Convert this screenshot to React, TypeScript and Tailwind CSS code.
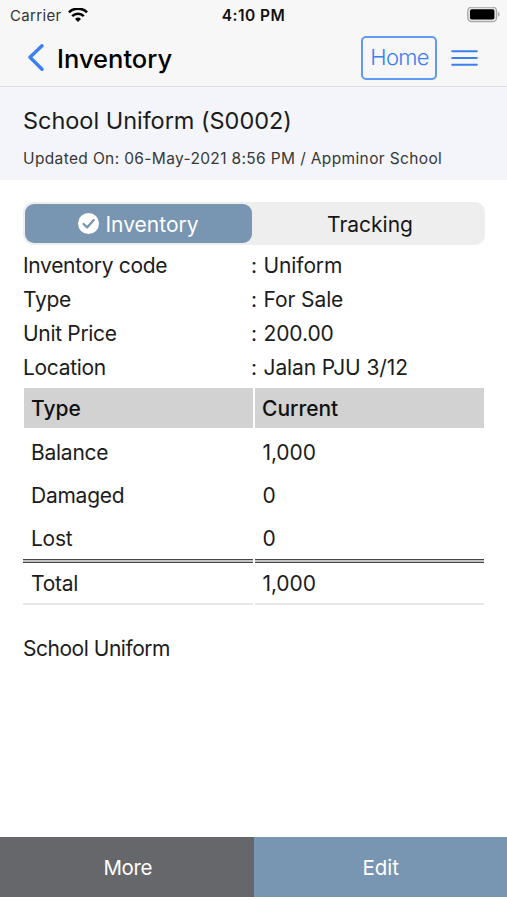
// Define types for the inventory data
type Detail = {
  label: string;
  value: string;
};

type StockRow = {
  type: string;
  current: string;
};

const details: Detail[] = [
  { label: "Inventory code", value: "Uniform" },
  { label: "Type", value: "For Sale" },
  { label: "Unit Price", value: "200.00" },
  { label: "Location", value: "Jalan PJU 3/12" },
];

const stock: StockRow[] = [
  { type: "Balance", current: "1,000" },
  { type: "Damaged", current: "0" },
  { type: "Lost", current: "0" },
];

function StatusBar() {
  return (
    <div className="grid h-[30px] grid-cols-3 items-center text-[15px] leading-none">
      <div className="flex items-center pl-[10px] text-[#333]">
        <span className="tracking-[0.35px]">Carrier</span>
        <svg className="ml-[6px] h-[15px] w-5" viewBox="0 0 20 15" fill="none" stroke="#050505">
          <path d="M1 4.4a12.8 12.8 0 0 1 18 0" strokeWidth="2.7" />
          <path d="M4.2 8.1a8.2 8.2 0 0 1 11.6 0" strokeWidth="2.6" />
          <path d="M10 14l-3-3a4.3 4.3 0 0 1 6 0z" fill="#050505" stroke="none" />
        </svg>
      </div>
      <span className="pt-px text-center text-[15.5px] font-semibold tracking-[0.5px] text-[#111]">4:10 PM</span>
      <div className="flex justify-end pr-[7px]">
        <svg className="h-4 w-[33px]" viewBox="0 0 33 16">
          <rect x="0.8" y="0.1" width="28.8" height="14.6" rx="4" fill="#e4e4e4" stroke="#a9a9a9" strokeWidth="1.3" />
          <rect x="3" y="2.3" width="24.4" height="10.2" rx="1.8" fill="#000" />
          <path d="M31 5.1c2 .6 2 4 0 4.6z" fill="#a9a9a9" />
        </svg>
      </div>
    </div>
  );
}

function NavBar() {
  return (
    <div className="flex h-14 items-center pr-[29px] pl-[27px]">
      <svg className="h-7 w-[18px]" viewBox="0 0 18 28" fill="none" stroke="#3a80f2" strokeWidth="3.4" strokeLinecap="round" strokeLinejoin="round">
        <path d="M15 1.8L3 13.2l12 12" />
      </svg>
      <h1 className="ml-[12px] grow pt-px text-[25.5px] leading-none font-medium text-black">Inventory</h1>
      <button className="flex h-[44px] w-[76px] items-center justify-center rounded-[5px] border-2 border-[#5f9af3] pb-px pl-px text-[22px] font-[350] tracking-[-0.75px] text-[#3a80f2]">
        Home
      </button>
      <svg className="ml-[14px] h-[18px] w-[27px]" viewBox="0 0 27 18" stroke="#3a80f2" strokeWidth="2" strokeLinecap="round">
        <path d="M1.2 2.3h24.6M1.2 9h24.6M1.2 15.7h24.6" />
      </svg>
    </div>
  );
}

function Segments() {
  return (
    <div className="mr-[22px] ml-[23px] mt-[22px] flex h-[43px] rounded-[10px] bg-[#eeeeee] p-[2px] text-[21px] leading-none">
      <button className="flex h-[39px] w-[227px] items-center justify-center rounded-[9px] bg-[#7895b2] text-white">
        <svg className="mr-[6px] h-[21px] w-[21px]" viewBox="0 0 21 21">
          <circle cx="10.5" cy="10.5" r="10.5" fill="#fff" />
          <path d="M5.6 11l3.5 3.4 6.6-7.3" fill="none" stroke="#7895b2" strokeWidth="2.3" strokeLinecap="round" strokeLinejoin="round" />
        </svg>
        <span className="pt-px">Inventory</span>
      </button>
      <button className="grow pt-px pl-[5px] text-[#161616]">Tracking</button>
    </div>
  );
}

export default function App() {
  return (
    <div className="flex h-[900px] w-[507px] flex-col overflow-hidden bg-white font-[Inter,sans-serif] text-[#1c1c1c]">
      <header className="h-[87px] border-b border-[#dcdfe2] bg-[#f7f7f7]">
        <StatusBar />
        <NavBar />
      </header>

      <div className="h-[93px] bg-[#f3f5fa] pl-[23px]">
        <h2 className="pt-[18px] text-[23.5px] leading-8 tracking-[-0.03px]">School Uniform (S0002)</h2>
        <p className="mt-3 text-[15.5px] leading-5 tracking-[0.36px] text-[#383838]">
          Updated On: 06-May-2021 8:56 PM / Appminor School
        </p>
      </div>

      <Segments />

      {/* Item details */}
      <dl className="mx-[23px] mt-[4.6px] text-[21px]">
        {details.map((item) => (
          <div key={item.label} className="flex h-[33.7px] items-center leading-6">
            <dt className="w-[228px] tracking-[-0.32px]">{item.label}</dt>
            <dd className="flex tracking-[-0.1px]">
              <span className="w-[12.5px]">:</span>
              {item.value}
            </dd>
          </div>
        ))}
      </dl>

      {/* Stock table */}
      <div className="mr-[23px] ml-[23px] mt-[3.6px] text-[21px] leading-none">
        <div className="grid h-[40px] grid-cols-2 gap-[2px] pl-px font-medium text-[#111]">
          <div className="flex items-center bg-[#d2d2d2] pt-[2px] pl-[7px]">Type</div>
          <div className="flex items-center bg-[#d2d2d2] pt-[2px] pl-[7px]">Current</div>
        </div>
        <div className="pt-[3px]">
          {stock.map((row) => (
            <div key={row.type} className="grid h-[43px] grid-cols-2 gap-[2px]">
              <div className="flex items-center pl-2 tracking-[-0.25px]">{row.type}</div>
              <div className="flex items-center pl-2 tracking-[-0.1px]">{row.current}</div>
            </div>
          ))}
        </div>

        {/* Double rule above the total */}
        <div className="-mt-px grid grid-cols-2 gap-[2px]">
          <div className="h-1 border-y border-[#444] bg-[#c4c4c4]" />
          <div className="h-1 border-y border-[#444] bg-[#c4c4c4]" />
        </div>
        <div className="grid h-[42px] grid-cols-2 gap-[2px]">
          <div className="flex items-center border-b-2 border-[#e8e8e8] pt-[2px] pl-2 tracking-[-0.25px]">Total</div>
          <div className="flex items-center border-b-2 border-[#e8e8e8] pt-[2px] pl-2 tracking-[-0.1px]">1,000</div>
        </div>
      </div>

      <p className="mx-[23px] mt-[32px] grow text-[21px] leading-[24px] tracking-[-0.47px]">School Uniform</p>

      <footer className="mb-[3px] grid h-[60px] grid-cols-2 text-[20.5px] text-white">
        <button className="bg-[#66676b] pt-[2px] pl-[2px] tracking-[-0.4px]">More</button>
        <button className="bg-[#7895b2] pt-[2px] pl-px">Edit</button>
      </footer>
    </div>
  );
}
